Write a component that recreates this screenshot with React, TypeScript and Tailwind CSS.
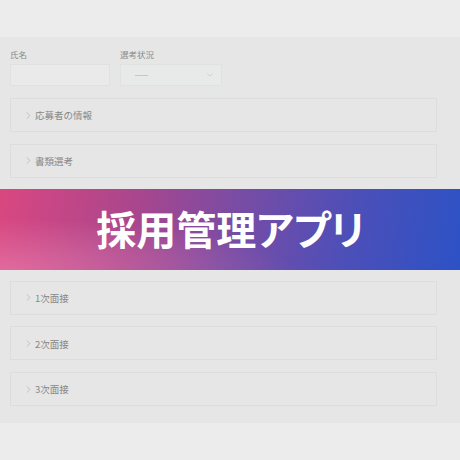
import { ChevronDown, ChevronRight } from 'lucide-react';

// the 3rd and 4th panels sit under the title banner and never show
const sections = ['応募者の情報', '書類選考', '', '', '1次面接', '2次面接', '3次面接'];

const Section = ({ title }: { title: string }) => (
  <div className="flex items-center h-[34px] border border-[#dddddd] bg-[#e6e6e6] pl-[12px] pt-[2px]">
    <ChevronRight className="w-[11px] h-[11px] text-[#a6a6a6] mr-[1px] -mt-[2px]" strokeWidth={1.3} />
    <span className="text-[9.5px] text-[#878787] leading-none">{title}</span>
  </div>
);

export default function App() {
  return (
    <div className="relative w-[460px] h-[460px] bg-[#ececec] font-['Noto_Sans_CJK_JP','Noto_Sans',sans-serif] overflow-hidden">
      <div className="h-[37px]" />

      <main className="bg-[#e6e6e6] h-[386px] px-[10px] pt-[11px]">
        <div className="flex gap-[10px]">
          <div className="flex flex-col gap-[3px]">
            <label className="text-[8.5px] leading-[13px] text-[#8a8a8a]">氏名</label>
            <div className="w-[100px] h-[22px] bg-[#eaeaea] border border-[#e1e1e1]" />
          </div>
          <div className="flex flex-col gap-[3px]">
            <label className="text-[8.5px] leading-[13px] text-[#8a8a8a]">選考状況</label>
            <div className="w-[102px] h-[22px] bg-[#e8e9e9] border border-[#e1e1e1] flex items-center justify-between pl-[14px] pr-[6px]">
              <span className="w-[13px] h-px bg-[#b9c9dc]" />
              <ChevronDown className="w-[10px] h-[10px] text-[#b4c0cc]" strokeWidth={1.4} />
            </div>
          </div>
        </div>

        <div className="flex flex-col gap-[11.7px] w-[427px] mt-[12px]">
          {sections.map((s, i) => (
            <Section key={i} title={s} />
          ))}
        </div>
      </main>

      <div className="h-[37px]" />

      {/* title banner over the form */}
      <div className="absolute left-0 right-0 top-[189px] h-[81px] bg-[linear-gradient(100deg,#da4780_0%,#a8468e_30%,#7a4ca4_50%,#4d4fb8_75%,#2c52c6_100%)] flex items-center justify-center">
        <div className="absolute inset-0 bg-[radial-gradient(ellipse_at_0%_100%,rgba(240,150,190,0.45),rgba(240,150,190,0)_45%)]" />
        <h1 className="relative text-white font-bold text-[40px] leading-none [font-feature-settings:'palt'] pb-[3px] pl-[1px]">
          採用管理アプリ
        </h1>
      </div>
    </div>
  );
}
